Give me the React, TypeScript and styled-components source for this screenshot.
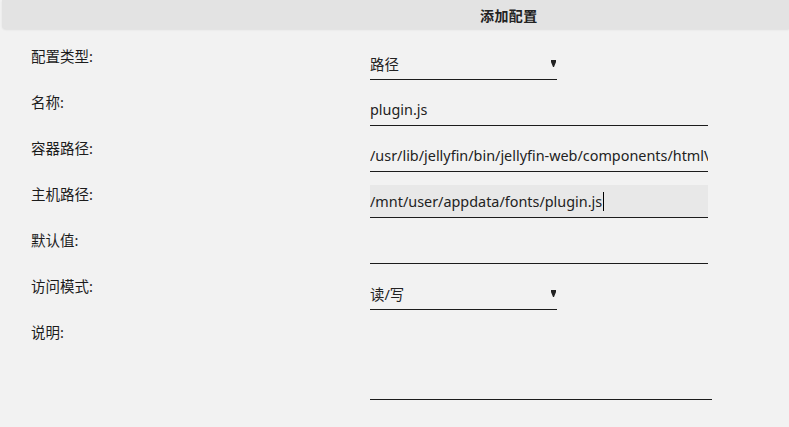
import React from "react";
import styled, { createGlobalStyle } from "styled-components";

const Global = createGlobalStyle`
  html, body { margin: 0; padding: 0; background: #f2f2f2; overflow: hidden; }
  body { font-family: "Noto Sans", "Noto Sans CJK SC", sans-serif; color: #1c1c1c; }
`;

const Dialog = styled.div`
  margin-left: 2px;
`;

const Header = styled.div`
  height: 29px;
  background: #e3e3e3;
  border-bottom-left-radius: 4px;
  box-shadow: 0 1px 2px rgba(0, 0, 0, 0.08);
  display: flex;
  align-items: center;
  padding-left: 478px;
`;

const Title = styled.span`
  font-size: 14px;
  font-weight: 700;
  color: #222;
  letter-spacing: 0.4px;
`;

const Form = styled.div`
  display: grid;
  grid-template-columns: 339px 342px;
  row-gap: 13px;
  padding: 18px 0 0 29px;
`;

const Label = styled.div`
  font-size: 14.5px;
  line-height: 19px;
  color: #1c1c1c;
`;

const Field = styled.div<{ $width: number; $active?: boolean; $height?: number }>`
  position: relative;
  box-sizing: border-box;
  width: ${(p) => p.$width}px;
  height: ${(p) => p.$height ?? 33}px;
  border-bottom: 1px solid #1c1c1c;
  background: ${(p) => (p.$active ? "#e8e8e8" : "transparent")};
  display: flex;
  align-items: center;
  overflow: hidden;
  white-space: nowrap;
  font-size: 14.4px;
  color: #222;
`;

const Caret = styled.span`
  display: inline-block;
  flex: none;
  width: 1px;
  height: 19px;
  background: #000;
  margin-left: 1px;
`;

const Arrow = styled.svg`
  position: absolute;
  right: 1px;
  top: 13px;
`;

const SelectArrow = () => (
  <Arrow width="5" height="7" viewBox="0 0 5 7">
    <polygon points="0,0 5,0 5,2 3,7 2,7 0,2" fill="#222" />
  </Arrow>
);

export default function App() {
  return (
    <>
      <Global />
      <Dialog>
        <Header>
          <Title>添加配置</Title>
        </Header>
        <Form>
          <Label>配置类型:</Label>
          <Field $width={187}>
            路径
            <SelectArrow />
          </Field>

          <Label>名称:</Label>
          <Field $width={338}>plugin.js</Field>

          <Label>容器路径:</Label>
          <Field $width={338}>/usr/lib/jellyfin/bin/jellyfin-web/components/htmlVideoPlayer/plugin.js</Field>

          <Label>主机路径:</Label>
          <Field $width={338} $active>
            /mnt/user/appdata/fonts/plugin.js
            <Caret />
          </Field>

          <Label>默认值:</Label>
          <Field $width={338}></Field>

          <Label>访问模式:</Label>
          <Field $width={187}>
            读/写
            <SelectArrow />
          </Field>

          <Label>说明:</Label>
          <Field $width={342} $height={77}></Field>
        </Form>
      </Dialog>
    </>
  );
}
